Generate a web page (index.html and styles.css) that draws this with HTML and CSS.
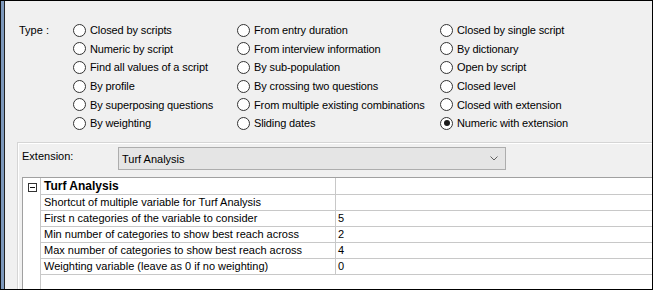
FILE: index.html
```html
<!DOCTYPE html>
<html lang="en">

<head>
  <meta charset="UTF-8">
  <title>Question type</title>
  <link rel="stylesheet" href="styles.css">
</head>

<body>
  <div class="window">
    <div class="edge"></div>
    <div class="panel">
      <div class="types">
        <div class="type-label">Type :</div>
        <label class="radio"><span class="dot"></span>Closed by scripts</label>
        <label class="radio"><span class="dot"></span>Numeric by script</label>
        <label class="radio"><span class="dot"></span>Find all values of a script</label>
        <label class="radio"><span class="dot"></span>By profile</label>
        <label class="radio"><span class="dot"></span>By superposing questions</label>
        <label class="radio"><span class="dot"></span>By weighting</label>

        <label class="radio"><span class="dot"></span>From entry duration</label>
        <label class="radio"><span class="dot"></span>From interview information</label>
        <label class="radio"><span class="dot"></span>By sub-population</label>
        <label class="radio"><span class="dot"></span>By crossing two questions</label>
        <label class="radio"><span class="dot"></span>From multiple existing combinations</label>
        <label class="radio"><span class="dot"></span>Sliding dates</label>

        <label class="radio"><span class="dot"></span>Closed by single script</label>
        <label class="radio"><span class="dot"></span>By dictionary</label>
        <label class="radio"><span class="dot"></span>Open by script</label>
        <label class="radio"><span class="dot"></span>Closed level</label>
        <label class="radio"><span class="dot"></span>Closed with extension</label>
        <label class="radio"><span class="dot checked"></span>Numeric with extension</label>
      </div>

      <div class="group">
        <div class="ext-row">
          <span class="ext-label">Extension:</span>
          <div class="combo">
            <span>Turf Analysis</span>
            <svg width="8" height="5" viewBox="0 0 8 5">
              <polyline points="0.5,0.5 4,4 7.5,0.5" fill="none" stroke="#606060" stroke-width="1" />
            </svg>
          </div>
        </div>

        <div class="grid">
          <div class="gutter">
            <span class="expander"></span>
          </div>
          <div class="cells">
            <div class="row head">
              <div class="name">Turf Analysis</div>
              <div class="value"></div>
            </div>
            <div class="row">
              <div class="name">Shortcut of multiple variable for Turf Analysis</div>
              <div class="value"></div>
            </div>
            <div class="row">
              <div class="name">First n categories of the variable to consider</div>
              <div class="value">5</div>
            </div>
            <div class="row">
              <div class="name">Min number of categories to show best reach across</div>
              <div class="value">2</div>
            </div>
            <div class="row">
              <div class="name">Max number of categories to show best reach across</div>
              <div class="value">4</div>
            </div>
            <div class="row">
              <div class="name">Weighting variable (leave as 0 if no weighting)</div>
              <div class="value">0</div>
            </div>
          </div>
        </div>
      </div>
    </div>
  </div>
</body>

</html>
```

FILE: styles.css
```css
body {
  margin: 0;
  font-family: 'Liberation Sans', Arial, sans-serif;
  font-size: 11px;
  color: #000;
}

.window {
  width: 653px;
  height: 290px;
  box-sizing: border-box;
  display: flex;
  border-top: 1px solid #000;
  border-right: 1px solid #000;
  border-bottom: 1px solid #000;
  overflow: hidden;
}

.edge {
  width: 3px;
  background: #7d98bb;
  border-left: 1px solid #111;
  border-right: 1px solid #222;
}

.panel {
  flex: 1;
  background: #f0f0f0;
  display: flex;
  flex-direction: column;
  min-width: 0;
}

/* type radios */
.types {
  height: 141px;
  box-sizing: border-box;
  padding: 20px 0 0 14px;
  display: grid;
  grid-template-columns: 54px 164px 203px 1fr;
  grid-template-rows: repeat(6, 18.6px);
  grid-auto-flow: column;
}

.type-label {
  grid-row: span 6;
  line-height: 18.6px;
}

.radio {
  display: flex;
  align-items: center;
  gap: 4px;
  white-space: nowrap;
  letter-spacing: -0.12px;
}

.dot {
  width: 13px;
  height: 13px;
  box-sizing: border-box;
  border: 1px solid #333;
  border-radius: 50%;
  background: #fff;
  display: flex;
  align-items: center;
  justify-content: center;
  flex: none;
}

.dot.checked::after {
  content: '';
  width: 6px;
  height: 6px;
  border-radius: 50%;
  background: #1a1a1a;
}

/* extension group */
.group {
  flex: 1;
  margin-left: 12px;
  border-top: 1px solid #d5d5d5;
  border-left: 1px solid #d5d5d5;
  box-shadow: inset 1px 1px 0 #fff;
  padding: 4px 0 0 4px;
  display: flex;
  flex-direction: column;
  min-height: 0;
}

.ext-row {
  display: flex;
  align-items: flex-start;
  height: 23px;
}

.ext-label {
  width: 96px;
  line-height: 13px;
  margin-top: 3px;
}

.combo {
  width: 388px;
  height: 23px;
  box-sizing: border-box;
  border: 1px solid #adadad;
  background: #e5e5e5;
  display: flex;
  align-items: center;
  justify-content: space-between;
  padding: 0 7px 0 3px;
}

.grid {
  flex: 1;
  margin-top: 7px;
  background: #fff;
  border-top: 1px solid #a0a0a0;
  border-left: 1px solid #a0a0a0;
  display: flex;
}

.gutter {
  width: 17px;
  border-right: 1px solid #c8c8c8;
}

.expander {
  display: block;
  position: relative;
  width: 9px;
  height: 9px;
  box-sizing: border-box;
  border: 1px solid #333;
  margin: 5px 0 0 5px;
}

.expander::after {
  content: '';
  position: absolute;
  left: 1px;
  top: 3px;
  width: 5px;
  height: 1px;
  background: #111;
}

.cells {
  flex: 1;
}

.row {
  display: flex;
  height: 16px;
  box-sizing: border-box;
  border-bottom: 1px solid #c8c8c8;
  line-height: 15px;
  white-space: nowrap;
}

.row.head {
  height: 17px;
  line-height: 16px;
  font-weight: bold;
  font-size: 12px;
}

.name {
  width: 295px;
  padding-left: 3px;
  box-sizing: border-box;
  border-right: 1px solid #c8c8c8;
}

.value {
  flex: 1;
  padding-left: 2px;
}
```
